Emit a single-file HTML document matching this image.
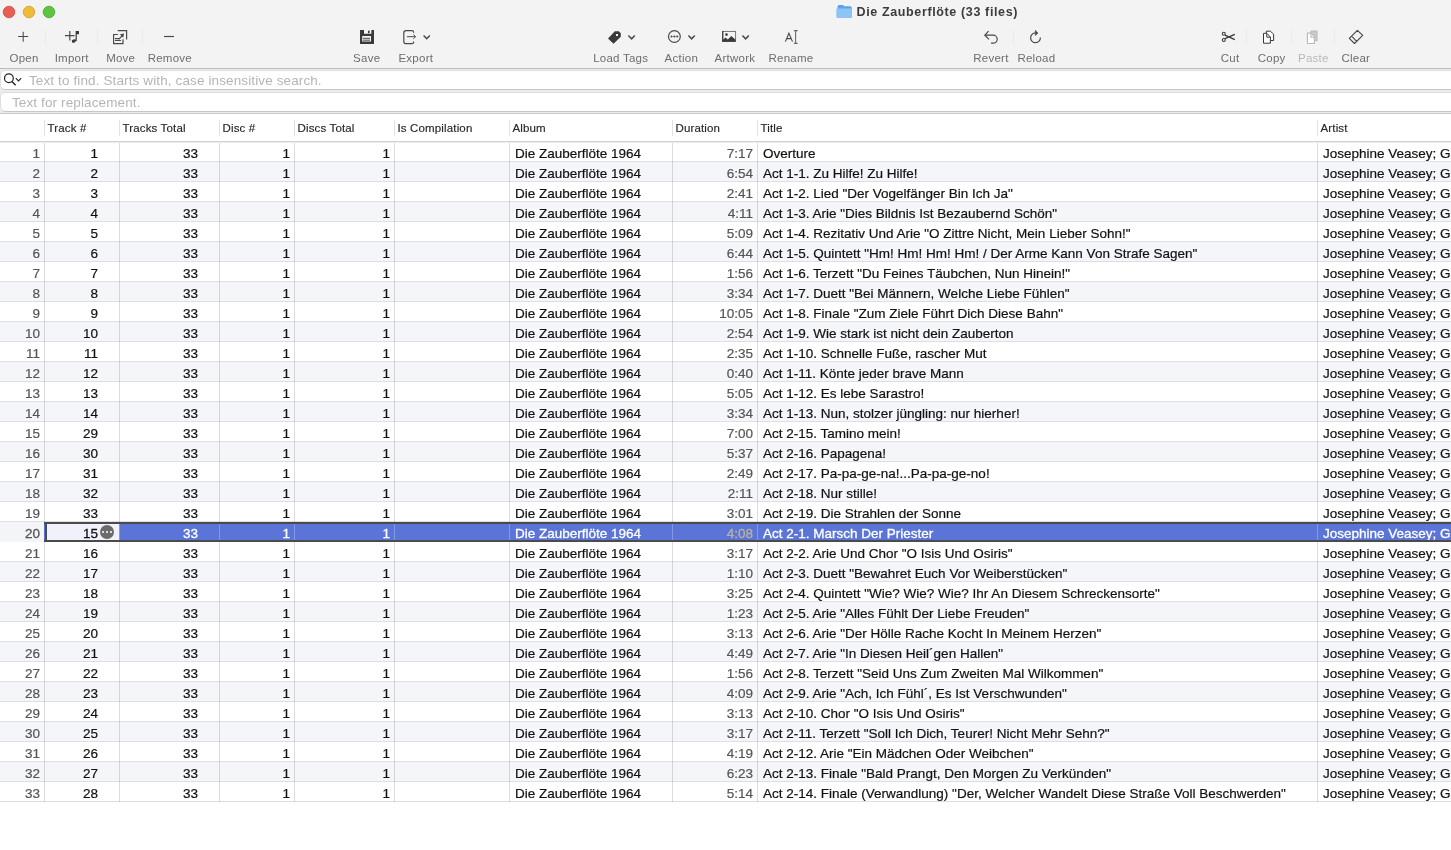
<!DOCTYPE html>
<html><head><meta charset="utf-8">
<style>
*{margin:0;padding:0;box-sizing:border-box}
html,body{width:1451px;height:850px;overflow:hidden;background:#fff;font-family:"Liberation Sans",sans-serif;}
#wrap{position:absolute;left:0;top:0;width:1451px;height:850px;will-change:transform}
#top{position:absolute;left:0;top:0;width:1451px;height:68px;background:#f3f3f3}
#tsvg{position:absolute;left:0;top:0}
#title{position:absolute;top:4px;left:856.5px;font-size:12.5px;font-weight:bold;color:#3c3c3c;white-space:nowrap;letter-spacing:0.63px;line-height:16px}
.lbl{position:absolute;top:52px;font-size:11.5px;color:#6d6d6d;white-space:nowrap;transform:translateX(-50%);letter-spacing:0.25px}
#tb{position:absolute;left:0;top:68px;width:1451px;height:1px;background:#bcbcbc}
#fbg{position:absolute;left:0;top:69px;width:1451px;height:44px;background:#ececec}
.fld{position:absolute;left:0;width:1460px;background:#fff;border-radius:5px;border:1px solid #dedede;border-bottom-color:#c6c6c6}
.ph{position:absolute;font-size:13.5px;letter-spacing:0.12px;color:#b5b5b5;white-space:nowrap}
#fb{position:absolute;left:0;top:113px;width:1451px;height:1px;background:#c9c9c9}
.h{position:absolute;top:120px;height:16px;border-left:1px solid #e2e2e2;font-size:11.5px;letter-spacing:0.15px;color:#262626;padding-left:2.5px;line-height:16px;white-space:nowrap;-webkit-text-stroke:0.15px currentColor}
#hb{position:absolute;left:0;top:141px;width:1451px;height:1px;background:#d2d2d2}
#hb2{position:absolute;left:0;top:142px;width:1451px;height:1px;background:#ececec}
.r{position:absolute;left:0;width:1451px;height:20px;background:#fff;border-bottom:1px solid #dfdfe3}
.r.alt{background:#f5f6fa}
.c{position:absolute;top:0;height:20px;font-size:13.5px;line-height:23px;color:#111;white-space:nowrap;overflow:hidden;border-left:1px solid rgba(0,0,0,0.135);-webkit-text-stroke:0.2px currentColor}
.c0{left:0;width:44px;border-left:none;color:#555;padding-right:4px}
.c1{left:44px;width:75px;padding-right:21px}
.c2{left:119px;width:100px;padding-right:21px}
.c3{left:219px;width:75px;padding-right:4px}
.c4{left:294px;width:100px;padding-right:4px}
.c5{left:394px;width:115px}
.c6{left:509px;width:163px;padding-left:5px}
.c7{left:672px;width:85px;padding-right:4px}
.c8{left:757px;width:560px;padding-left:5px}
.c9{left:1317px;width:200px;padding-left:5px}
.num{text-align:right}
.dur{color:#555}
.r.sel{background:#5a74d8;border-top:2px solid #4b4b4b;border-bottom:2px solid #4b4b4b;height:20px}
.r.sel .c{color:#fff;height:16px;line-height:19px;border-left-color:#8599e2;-webkit-text-stroke:0.3px currentColor}
.r.sel .c0{color:#555;background:#f4f5f9;top:-2px;height:20px;line-height:23px;border-top:none}
.r.sel .dur{color:#b9b49c}
.r.sel .edit{background:#f1f1fc;color:#111;border-left:2px solid #4b4b4b;left:45px;width:74px}
.more{position:absolute;left:53px;top:1px;width:14px;height:14px;border-radius:50%;background:#6b6b6b}
.more i{position:absolute;top:6px;width:2.2px;height:2.2px;border-radius:50%;background:#fff}
.more i:nth-child(1){left:2px}.more i:nth-child(2){left:6px}.more i:nth-child(3){left:10px}
</style></head><body><div id="wrap">
<div id="top">
<svg id="tsvg" width="1451" height="68" viewBox="0 0 1451 68">
<circle cx="9" cy="12" r="5.8" fill="#e85d54" stroke="#d14a40" stroke-width="0.8"/>
<circle cx="29" cy="12" r="5.8" fill="#eebc3c" stroke="#d99e26" stroke-width="0.8"/>
<circle cx="49" cy="12" r="5.8" fill="#5ec442" stroke="#48a82e" stroke-width="0.8"/>
<g fill="none" stroke="#e6e6e6" stroke-width="1">
<path d="M45.5 29V44M97.5 29V44M142.5 29V44M1013.5 29V44M1246.5 29V44M1291.5 29V44M1334.5 29V44" stroke="#ebebeb"/>
</g>
<g fill="none" stroke="#4a4a4a" stroke-width="1.2" stroke-linecap="butt">
<path d="M18 36.5H28.2M23.2 31.8V41.8" stroke-width="1.05"/>
<path d="M65 35.6H74.5M69.8 31V40.5"/>
<path d="M117.7 30.6H126.6V39.5M118 34.5H113.6V43.6H123V39.2M115 38.6H120M115 40.5H121M118.7 39.3L122.5 35.5"/>
<path d="M124 33.5L119.8 34.2L123.3 37.7Z" fill="#4a4a4a" stroke="none"/>
<path d="M164 36.5H174"/>
<path d="M413.6 32.8V32Q413.6 30.6 412 30.6H406Q403.8 30.6 403.8 32.8V41.4Q403.8 43.6 406 43.6H412Q413.6 43.6 413.6 42.2V41.4"/>
<path d="M407 36.7H415.4M413.4 34.6L415.6 36.7L413.4 38.8" stroke-width="1"/>
<path d="M423.6 35.4L426.7 38.7L429.8 35.4M628.4 35.4L631.6 38.8L634.8 35.4M688.4 35.4L691.6 38.8L694.8 35.4M742.4 35.4L745.6 38.8L748.8 35.4" stroke-width="1.5"/>
<circle cx="674.4" cy="36.5" r="5.9"/>
<path d="M988.6 31.2L984.8 35.2L989 39.4M984.8 35.2H993.2A4 4 0 0 1 993.2 43.2H991" />
<path d="M1040.4 37.6A4.9 4.9 0 1 1 1035.5 32.9"/>
<path d="M1357.4 30.3L1362.7 35.4L1354.5 43.5L1349.3 38.4ZM1351.6 36.2L1356.6 41.3" stroke-linejoin="round" stroke-width="1.15"/>
</g>
<path d="M671.5 36.5H677.3" stroke="#777" stroke-width="0.4"/>
<circle cx="671.5" cy="36.5" r="1" fill="#4a4a4a"/><circle cx="674.4" cy="36.5" r="1" fill="#4a4a4a"/><circle cx="677.3" cy="36.5" r="1" fill="#4a4a4a"/>
<path d="M1035.3 30.3L1038 33.1L1035.3 35.6Z" fill="#4a4a4a" stroke="#4a4a4a" stroke-width="0.6" stroke-linejoin="round"/>
<g fill="#3a3a3a">
<path d="M75.6 31H79V34.2H76.8V41H75.6Z"/>
<ellipse cx="73.9" cy="41" rx="2.2" ry="1.6" transform="rotate(-25 73.9 41)"/>
<path fill-rule="evenodd" d="M360 30H374V44H360ZM364 30H371.4V33.8H364ZM362.2 36H371V41.6H362.2Z"/>
<rect x="368" y="30.6" width="1.6" height="2.6"/>
<rect x="363" y="37.8" width="7" height="0.9"/><rect x="363" y="39.7" width="7" height="0.9"/>
<path fill-rule="evenodd" d="M614.8 31.2L618.8 31.2L620.8 33.2L620.8 36.8L613.5 43.8L608 38.4ZM616 34H618V36H616Z"/>
</g>
<g>
<rect x="722.6" y="31.4" width="13" height="10" fill="none" stroke="#6a6a6a" stroke-width="0.9"/>
<path d="M722.2 31H723.4V41.8H722.2Z" fill="#3a3a3a"/>
<circle cx="726.5" cy="34.6" r="1.3" fill="#3a3a3a"/>
<path d="M722.6 40.2L725.4 37.6L727.8 39.4L731.3 36L735.6 39.8V41.8H722.6Z" fill="#3a3a3a"/>
</g>
<g fill="none" stroke="#4a4a4a" stroke-width="1.1">
<path d="M785.4 41.6L788.9 33.2L792.5 41.6M786.6 38.6H791.3"/>
</g>
<path d="M795.6 30.5V43.5M793.9 30.6H797.7M793.9 43.4H797.7" stroke="#6a6a6a" stroke-width="1.1" fill="none"/>
<g fill="none" stroke="#3a3a3a" stroke-width="1.1">
<circle cx="1223.8" cy="33.8" r="1.5"/><circle cx="1223.8" cy="40" r="1.5"/>
</g>
<path d="M1225 35.1L1234.8 39.6M1225 38.7L1234.8 34.4" stroke="#3a3a3a" stroke-width="1.3" fill="none"/>
<g fill="#fff" stroke="#3a3a3a" stroke-width="1" stroke-linejoin="round">
<path d="M1266.4 38V31.2H1270.4L1273.6 34.2V40.5H1270.5"/>
<path d="M1263.5 33.3H1266.8L1270.4 37V43.2H1263.5Z"/>
<path d="M1266.8 33.5V37.2H1270.2" fill="none"/>
</g>
<g stroke="#bababa" stroke-width="1.1" stroke-linejoin="round">
<path d="M1311 31H1317V40.7H1311Z" fill="#c9c9c9"/>
<path d="M1307.4 33.1H1311L1314.4 36.6V43.5H1307.4Z" fill="#fff"/>
<path d="M1311 33.3V37.2H1314.2" fill="none"/>
</g>
<g>
<path d="M837.5 6.5Q837.5 5 839 5H843L844.2 6.3H850.3Q851.8 6.3 851.8 7.8V16.5Q851.8 18 850.3 18H839Q837.5 18 837.5 16.5Z" fill="#5aa3e8"/>
<path d="M836.3 8.6H851.8V16.6Q851.8 18 850.3 18H837.8Q836.3 18 836.3 16.6Z" fill="#8cc4f5"/>
</g>
</svg>
<div id="title">Die Zauberflöte (33 files)</div>
<div class="lbl" style="left:24.1px">Open</div>
<div class="lbl" style="left:71.7px">Import</div>
<div class="lbl" style="left:120.7px">Move</div>
<div class="lbl" style="left:169.8px">Remove</div>
<div class="lbl" style="left:366.7px">Save</div>
<div class="lbl" style="left:415.8px">Export</div>
<div class="lbl" style="left:620.7px">Load Tags</div>
<div class="lbl" style="left:681.3px">Action</div>
<div class="lbl" style="left:734.9px">Artwork</div>
<div class="lbl" style="left:791.0px">Rename</div>
<div class="lbl" style="left:990.9px">Revert</div>
<div class="lbl" style="left:1036.4px">Reload</div>
<div class="lbl" style="left:1230.1px">Cut</div>
<div class="lbl" style="left:1271.7px">Copy</div>
<div class="lbl" style="left:1313.3px;color:#b8b8b8">Paste</div>
<div class="lbl" style="left:1355.8px">Clear</div>
</div>
<div id="tb"></div>
<div id="fbg"></div>
<div class="fld" style="top:70px;height:20px"></div>
<div class="fld" style="top:92px;height:20px"></div>
<svg style="position:absolute;left:0;top:70px" width="30" height="20" viewBox="0 70 30 20">
<circle cx="8.9" cy="78.3" r="4.4" fill="none" stroke="#222" stroke-width="1.2"/>
<path d="M12 81.6L15.6 85.3" stroke="#222" stroke-width="1.4"/>
<path d="M15.8 78.2L18.5 80.9L21.2 78.2" stroke="#222" stroke-width="1.1" fill="none"/>
</svg>
<div class="ph" style="left:29px;top:73px">Text to find. Starts with, case insensitive search.</div>
<div class="ph" style="left:12px;top:95px">Text for replacement.</div>
<div id="fb"></div>
<div class="h" style="left:44px">Track #</div>
<div class="h" style="left:119px">Tracks Total</div>
<div class="h" style="left:219px">Disc #</div>
<div class="h" style="left:294px">Discs Total</div>
<div class="h" style="left:394px">Is Compilation</div>
<div class="h" style="left:509px">Album</div>
<div class="h" style="left:672px">Duration</div>
<div class="h" style="left:757px">Title</div>
<div class="h" style="left:1317px">Artist</div>
<div id="hb"></div>
<div class="r" style="top:142px"><div class="c c0 num">1</div><div class="c c1 num">1</div><div class="c c2 num">33</div><div class="c c3 num">1</div><div class="c c4 num">1</div><div class="c c5"></div><div class="c c6">Die Zauberflöte 1964</div><div class="c c7 num dur">7:17</div><div class="c c8">Overture</div><div class="c c9">Josephine Veasey; Gottlob Frick</div></div>
<div class="r alt" style="top:162px"><div class="c c0 num">2</div><div class="c c1 num">2</div><div class="c c2 num">33</div><div class="c c3 num">1</div><div class="c c4 num">1</div><div class="c c5"></div><div class="c c6">Die Zauberflöte 1964</div><div class="c c7 num dur">6:54</div><div class="c c8">Act 1-1. Zu Hilfe! Zu Hilfe!</div><div class="c c9">Josephine Veasey; Gottlob Frick</div></div>
<div class="r" style="top:182px"><div class="c c0 num">3</div><div class="c c1 num">3</div><div class="c c2 num">33</div><div class="c c3 num">1</div><div class="c c4 num">1</div><div class="c c5"></div><div class="c c6">Die Zauberflöte 1964</div><div class="c c7 num dur">2:41</div><div class="c c8">Act 1-2. Lied "Der Vogelfänger Bin Ich Ja"</div><div class="c c9">Josephine Veasey; Gottlob Frick</div></div>
<div class="r alt" style="top:202px"><div class="c c0 num">4</div><div class="c c1 num">4</div><div class="c c2 num">33</div><div class="c c3 num">1</div><div class="c c4 num">1</div><div class="c c5"></div><div class="c c6">Die Zauberflöte 1964</div><div class="c c7 num dur">4:11</div><div class="c c8">Act 1-3. Arie "Dies Bildnis Ist Bezaubernd Schön"</div><div class="c c9">Josephine Veasey; Gottlob Frick</div></div>
<div class="r" style="top:222px"><div class="c c0 num">5</div><div class="c c1 num">5</div><div class="c c2 num">33</div><div class="c c3 num">1</div><div class="c c4 num">1</div><div class="c c5"></div><div class="c c6">Die Zauberflöte 1964</div><div class="c c7 num dur">5:09</div><div class="c c8">Act 1-4. Rezitativ Und Arie "O Zittre Nicht, Mein Lieber Sohn!"</div><div class="c c9">Josephine Veasey; Gottlob Frick</div></div>
<div class="r alt" style="top:242px"><div class="c c0 num">6</div><div class="c c1 num">6</div><div class="c c2 num">33</div><div class="c c3 num">1</div><div class="c c4 num">1</div><div class="c c5"></div><div class="c c6">Die Zauberflöte 1964</div><div class="c c7 num dur">6:44</div><div class="c c8">Act 1-5. Quintett "Hm! Hm! Hm! Hm! / Der Arme Kann Von Strafe Sagen"</div><div class="c c9">Josephine Veasey; Gottlob Frick</div></div>
<div class="r" style="top:262px"><div class="c c0 num">7</div><div class="c c1 num">7</div><div class="c c2 num">33</div><div class="c c3 num">1</div><div class="c c4 num">1</div><div class="c c5"></div><div class="c c6">Die Zauberflöte 1964</div><div class="c c7 num dur">1:56</div><div class="c c8">Act 1-6. Terzett "Du Feines Täubchen, Nun Hinein!"</div><div class="c c9">Josephine Veasey; Gottlob Frick</div></div>
<div class="r alt" style="top:282px"><div class="c c0 num">8</div><div class="c c1 num">8</div><div class="c c2 num">33</div><div class="c c3 num">1</div><div class="c c4 num">1</div><div class="c c5"></div><div class="c c6">Die Zauberflöte 1964</div><div class="c c7 num dur">3:34</div><div class="c c8">Act 1-7. Duett "Bei Männern, Welche Liebe Fühlen"</div><div class="c c9">Josephine Veasey; Gottlob Frick</div></div>
<div class="r" style="top:302px"><div class="c c0 num">9</div><div class="c c1 num">9</div><div class="c c2 num">33</div><div class="c c3 num">1</div><div class="c c4 num">1</div><div class="c c5"></div><div class="c c6">Die Zauberflöte 1964</div><div class="c c7 num dur">10:05</div><div class="c c8">Act 1-8. Finale "Zum Ziele Führt Dich Diese Bahn"</div><div class="c c9">Josephine Veasey; Gottlob Frick</div></div>
<div class="r alt" style="top:322px"><div class="c c0 num">10</div><div class="c c1 num">10</div><div class="c c2 num">33</div><div class="c c3 num">1</div><div class="c c4 num">1</div><div class="c c5"></div><div class="c c6">Die Zauberflöte 1964</div><div class="c c7 num dur">2:54</div><div class="c c8">Act 1-9. Wie stark ist nicht dein Zauberton</div><div class="c c9">Josephine Veasey; Gottlob Frick</div></div>
<div class="r" style="top:342px"><div class="c c0 num">11</div><div class="c c1 num">11</div><div class="c c2 num">33</div><div class="c c3 num">1</div><div class="c c4 num">1</div><div class="c c5"></div><div class="c c6">Die Zauberflöte 1964</div><div class="c c7 num dur">2:35</div><div class="c c8">Act 1-10. Schnelle Fuße, rascher Mut</div><div class="c c9">Josephine Veasey; Gottlob Frick</div></div>
<div class="r alt" style="top:362px"><div class="c c0 num">12</div><div class="c c1 num">12</div><div class="c c2 num">33</div><div class="c c3 num">1</div><div class="c c4 num">1</div><div class="c c5"></div><div class="c c6">Die Zauberflöte 1964</div><div class="c c7 num dur">0:40</div><div class="c c8">Act 1-11. Könte jeder brave Mann</div><div class="c c9">Josephine Veasey; Gottlob Frick</div></div>
<div class="r" style="top:382px"><div class="c c0 num">13</div><div class="c c1 num">13</div><div class="c c2 num">33</div><div class="c c3 num">1</div><div class="c c4 num">1</div><div class="c c5"></div><div class="c c6">Die Zauberflöte 1964</div><div class="c c7 num dur">5:05</div><div class="c c8">Act 1-12. Es lebe Sarastro!</div><div class="c c9">Josephine Veasey; Gottlob Frick</div></div>
<div class="r alt" style="top:402px"><div class="c c0 num">14</div><div class="c c1 num">14</div><div class="c c2 num">33</div><div class="c c3 num">1</div><div class="c c4 num">1</div><div class="c c5"></div><div class="c c6">Die Zauberflöte 1964</div><div class="c c7 num dur">3:34</div><div class="c c8">Act 1-13. Nun, stolzer jüngling: nur hierher!</div><div class="c c9">Josephine Veasey; Gottlob Frick</div></div>
<div class="r" style="top:422px"><div class="c c0 num">15</div><div class="c c1 num">29</div><div class="c c2 num">33</div><div class="c c3 num">1</div><div class="c c4 num">1</div><div class="c c5"></div><div class="c c6">Die Zauberflöte 1964</div><div class="c c7 num dur">7:00</div><div class="c c8">Act 2-15. Tamino mein!</div><div class="c c9">Josephine Veasey; Gottlob Frick</div></div>
<div class="r alt" style="top:442px"><div class="c c0 num">16</div><div class="c c1 num">30</div><div class="c c2 num">33</div><div class="c c3 num">1</div><div class="c c4 num">1</div><div class="c c5"></div><div class="c c6">Die Zauberflöte 1964</div><div class="c c7 num dur">5:37</div><div class="c c8">Act 2-16. Papagena!</div><div class="c c9">Josephine Veasey; Gottlob Frick</div></div>
<div class="r" style="top:462px"><div class="c c0 num">17</div><div class="c c1 num">31</div><div class="c c2 num">33</div><div class="c c3 num">1</div><div class="c c4 num">1</div><div class="c c5"></div><div class="c c6">Die Zauberflöte 1964</div><div class="c c7 num dur">2:49</div><div class="c c8">Act 2-17. Pa-pa-ge-na!...Pa-pa-ge-no!</div><div class="c c9">Josephine Veasey; Gottlob Frick</div></div>
<div class="r alt" style="top:482px"><div class="c c0 num">18</div><div class="c c1 num">32</div><div class="c c2 num">33</div><div class="c c3 num">1</div><div class="c c4 num">1</div><div class="c c5"></div><div class="c c6">Die Zauberflöte 1964</div><div class="c c7 num dur">2:11</div><div class="c c8">Act 2-18. Nur stille!</div><div class="c c9">Josephine Veasey; Gottlob Frick</div></div>
<div class="r" style="top:502px"><div class="c c0 num">19</div><div class="c c1 num">33</div><div class="c c2 num">33</div><div class="c c3 num">1</div><div class="c c4 num">1</div><div class="c c5"></div><div class="c c6">Die Zauberflöte 1964</div><div class="c c7 num dur">3:01</div><div class="c c8">Act 2-19. Die Strahlen der Sonne</div><div class="c c9">Josephine Veasey; Gottlob Frick</div></div>
<div class="r alt sel" style="top:522px"><div class="c c0 num">20</div><div class="c c1 num edit">15<span class="more"><i></i><i></i><i></i></span></div><div class="c c2 num">33</div><div class="c c3 num">1</div><div class="c c4 num">1</div><div class="c c5"></div><div class="c c6">Die Zauberflöte 1964</div><div class="c c7 num dur">4:08</div><div class="c c8">Act 2-1. Marsch Der Priester</div><div class="c c9">Josephine Veasey; Gottlob Frick</div></div>
<div class="r" style="top:542px"><div class="c c0 num">21</div><div class="c c1 num">16</div><div class="c c2 num">33</div><div class="c c3 num">1</div><div class="c c4 num">1</div><div class="c c5"></div><div class="c c6">Die Zauberflöte 1964</div><div class="c c7 num dur">3:17</div><div class="c c8">Act 2-2. Arie Und Chor "O Isis Und Osiris"</div><div class="c c9">Josephine Veasey; Gottlob Frick</div></div>
<div class="r alt" style="top:562px"><div class="c c0 num">22</div><div class="c c1 num">17</div><div class="c c2 num">33</div><div class="c c3 num">1</div><div class="c c4 num">1</div><div class="c c5"></div><div class="c c6">Die Zauberflöte 1964</div><div class="c c7 num dur">1:10</div><div class="c c8">Act 2-3. Duett "Bewahret Euch Vor Weiberstücken"</div><div class="c c9">Josephine Veasey; Gottlob Frick</div></div>
<div class="r" style="top:582px"><div class="c c0 num">23</div><div class="c c1 num">18</div><div class="c c2 num">33</div><div class="c c3 num">1</div><div class="c c4 num">1</div><div class="c c5"></div><div class="c c6">Die Zauberflöte 1964</div><div class="c c7 num dur">3:25</div><div class="c c8">Act 2-4. Quintett "Wie? Wie? Wie? Ihr An Diesem Schreckensorte"</div><div class="c c9">Josephine Veasey; Gottlob Frick</div></div>
<div class="r alt" style="top:602px"><div class="c c0 num">24</div><div class="c c1 num">19</div><div class="c c2 num">33</div><div class="c c3 num">1</div><div class="c c4 num">1</div><div class="c c5"></div><div class="c c6">Die Zauberflöte 1964</div><div class="c c7 num dur">1:23</div><div class="c c8">Act 2-5. Arie "Alles Fühlt Der Liebe Freuden"</div><div class="c c9">Josephine Veasey; Gottlob Frick</div></div>
<div class="r" style="top:622px"><div class="c c0 num">25</div><div class="c c1 num">20</div><div class="c c2 num">33</div><div class="c c3 num">1</div><div class="c c4 num">1</div><div class="c c5"></div><div class="c c6">Die Zauberflöte 1964</div><div class="c c7 num dur">3:13</div><div class="c c8">Act 2-6. Arie "Der Hölle Rache Kocht In Meinem Herzen"</div><div class="c c9">Josephine Veasey; Gottlob Frick</div></div>
<div class="r alt" style="top:642px"><div class="c c0 num">26</div><div class="c c1 num">21</div><div class="c c2 num">33</div><div class="c c3 num">1</div><div class="c c4 num">1</div><div class="c c5"></div><div class="c c6">Die Zauberflöte 1964</div><div class="c c7 num dur">4:49</div><div class="c c8">Act 2-7. Arie "In Diesen Heil´gen Hallen"</div><div class="c c9">Josephine Veasey; Gottlob Frick</div></div>
<div class="r" style="top:662px"><div class="c c0 num">27</div><div class="c c1 num">22</div><div class="c c2 num">33</div><div class="c c3 num">1</div><div class="c c4 num">1</div><div class="c c5"></div><div class="c c6">Die Zauberflöte 1964</div><div class="c c7 num dur">1:56</div><div class="c c8">Act 2-8. Terzett "Seid Uns Zum Zweiten Mal Wilkommen"</div><div class="c c9">Josephine Veasey; Gottlob Frick</div></div>
<div class="r alt" style="top:682px"><div class="c c0 num">28</div><div class="c c1 num">23</div><div class="c c2 num">33</div><div class="c c3 num">1</div><div class="c c4 num">1</div><div class="c c5"></div><div class="c c6">Die Zauberflöte 1964</div><div class="c c7 num dur">4:09</div><div class="c c8">Act 2-9. Arie "Ach, Ich Fühl´, Es Ist Verschwunden"</div><div class="c c9">Josephine Veasey; Gottlob Frick</div></div>
<div class="r" style="top:702px"><div class="c c0 num">29</div><div class="c c1 num">24</div><div class="c c2 num">33</div><div class="c c3 num">1</div><div class="c c4 num">1</div><div class="c c5"></div><div class="c c6">Die Zauberflöte 1964</div><div class="c c7 num dur">3:13</div><div class="c c8">Act 2-10. Chor "O Isis Und Osiris"</div><div class="c c9">Josephine Veasey; Gottlob Frick</div></div>
<div class="r alt" style="top:722px"><div class="c c0 num">30</div><div class="c c1 num">25</div><div class="c c2 num">33</div><div class="c c3 num">1</div><div class="c c4 num">1</div><div class="c c5"></div><div class="c c6">Die Zauberflöte 1964</div><div class="c c7 num dur">3:17</div><div class="c c8">Act 2-11. Terzett "Soll Ich Dich, Teurer! Nicht Mehr Sehn?"</div><div class="c c9">Josephine Veasey; Gottlob Frick</div></div>
<div class="r" style="top:742px"><div class="c c0 num">31</div><div class="c c1 num">26</div><div class="c c2 num">33</div><div class="c c3 num">1</div><div class="c c4 num">1</div><div class="c c5"></div><div class="c c6">Die Zauberflöte 1964</div><div class="c c7 num dur">4:19</div><div class="c c8">Act 2-12. Arie "Ein Mädchen Oder Weibchen"</div><div class="c c9">Josephine Veasey; Gottlob Frick</div></div>
<div class="r alt" style="top:762px"><div class="c c0 num">32</div><div class="c c1 num">27</div><div class="c c2 num">33</div><div class="c c3 num">1</div><div class="c c4 num">1</div><div class="c c5"></div><div class="c c6">Die Zauberflöte 1964</div><div class="c c7 num dur">6:23</div><div class="c c8">Act 2-13. Finale "Bald Prangt, Den Morgen Zu Verkünden"</div><div class="c c9">Josephine Veasey; Gottlob Frick</div></div>
<div class="r" style="top:782px"><div class="c c0 num">33</div><div class="c c1 num">28</div><div class="c c2 num">33</div><div class="c c3 num">1</div><div class="c c4 num">1</div><div class="c c5"></div><div class="c c6">Die Zauberflöte 1964</div><div class="c c7 num dur">5:14</div><div class="c c8">Act 2-14. Finale (Verwandlung) "Der, Welcher Wandelt Diese Straße Voll Beschwerden"</div><div class="c c9">Josephine Veasey; Gottlob Frick</div></div><div id="hb2"></div>
</div></body></html>
